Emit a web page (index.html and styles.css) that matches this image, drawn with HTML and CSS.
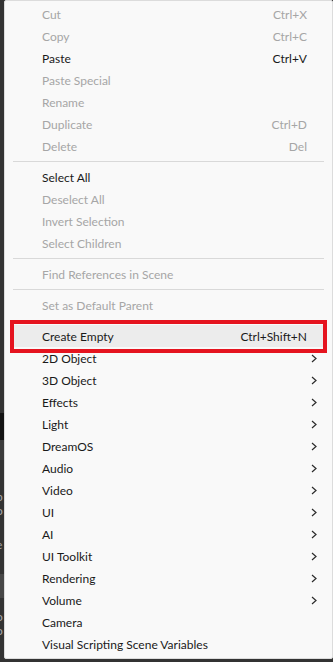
FILE: index.html
```html
<!DOCTYPE html>
<html lang="en">
<head>
    <meta charset="UTF-8">
    <meta name="viewport" content="width=device-width, initial-scale=1.0">
    <title>Hierarchy Context Menu</title>
    <link rel="stylesheet" href="styles.css">
</head>
<body>
<div class="editor">
    <div class="backdrop">
        <div class="band dark"></div>
        <div class="band mid"></div>
        <div class="band glyph">p</div>
        <div class="band glyph">o</div>
        <div class="band glyph">e</div>
        <div class="band light"></div>
        <div class="band glyph">o</div>
        <div class="band glyph">o</div>
    </div>

    <div class="menu">
        <div class="group">
            <div class="item disabled"><span class="label">Cut</span><span class="key">Ctrl+X</span></div>
            <div class="item disabled"><span class="label">Copy</span><span class="key">Ctrl+C</span></div>
            <div class="item"><span class="label">Paste</span><span class="key">Ctrl+V</span></div>
            <div class="item disabled"><span class="label">Paste Special</span></div>
            <div class="item disabled"><span class="label">Rename</span></div>
            <div class="item disabled"><span class="label">Duplicate</span><span class="key">Ctrl+D</span></div>
            <div class="item disabled"><span class="label">Delete</span><span class="key">Del</span></div>
        </div>
        <div class="separator"></div>
        <div class="group">
            <div class="item"><span class="label">Select All</span></div>
            <div class="item disabled"><span class="label">Deselect All</span></div>
            <div class="item disabled"><span class="label">Invert Selection</span></div>
            <div class="item disabled"><span class="label">Select Children</span></div>
        </div>
        <div class="separator"></div>
        <div class="item disabled"><span class="label">Find References in Scene</span></div>
        <div class="separator"></div>
        <div class="item disabled"><span class="label">Set as Default Parent</span></div>
        <div class="separator"></div>
        <div class="group">
            <div class="item active"><span class="label">Create Empty</span><span class="key">Ctrl+Shift+N</span></div>
            <div class="item sub"><span class="label">2D Object</span><svg class="chevron" viewBox="0 0 6 9"><polyline points="1,1 5,4.5 1,8"/></svg></div>
            <div class="item sub"><span class="label">3D Object</span><svg class="chevron" viewBox="0 0 6 9"><polyline points="1,1 5,4.5 1,8"/></svg></div>
            <div class="item sub"><span class="label">Effects</span><svg class="chevron" viewBox="0 0 6 9"><polyline points="1,1 5,4.5 1,8"/></svg></div>
            <div class="item sub"><span class="label">Light</span><svg class="chevron" viewBox="0 0 6 9"><polyline points="1,1 5,4.5 1,8"/></svg></div>
            <div class="item sub"><span class="label">DreamOS</span><svg class="chevron" viewBox="0 0 6 9"><polyline points="1,1 5,4.5 1,8"/></svg></div>
            <div class="item sub"><span class="label">Audio</span><svg class="chevron" viewBox="0 0 6 9"><polyline points="1,1 5,4.5 1,8"/></svg></div>
            <div class="item sub"><span class="label">Video</span><svg class="chevron" viewBox="0 0 6 9"><polyline points="1,1 5,4.5 1,8"/></svg></div>
            <div class="item sub"><span class="label">UI</span><svg class="chevron" viewBox="0 0 6 9"><polyline points="1,1 5,4.5 1,8"/></svg></div>
            <div class="item sub"><span class="label">AI</span><svg class="chevron" viewBox="0 0 6 9"><polyline points="1,1 5,4.5 1,8"/></svg></div>
            <div class="item sub"><span class="label">UI Toolkit</span><svg class="chevron" viewBox="0 0 6 9"><polyline points="1,1 5,4.5 1,8"/></svg></div>
            <div class="item sub"><span class="label">Rendering</span><svg class="chevron" viewBox="0 0 6 9"><polyline points="1,1 5,4.5 1,8"/></svg></div>
            <div class="item sub"><span class="label">Volume</span><svg class="chevron" viewBox="0 0 6 9"><polyline points="1,1 5,4.5 1,8"/></svg></div>
            <div class="item"><span class="label">Camera</span></div>
            <div class="item"><span class="label">Visual Scripting Scene Variables</span></div>
        </div>
    </div>
</div>
</body>
</html>
```

FILE: styles.css
```css
* {
    margin: 0;
    padding: 0;
    box-sizing: border-box;
}

body {
    width: 333px;
    height: 662px;
    overflow: hidden;
    background: #333333;
    font-family: "Segoe UI", Lato, "Noto Sans", sans-serif;
    font-size: 12px;
    color: #1a1a1a;
}

.editor {
    display: flex;
    height: 662px;
}

/* bits of the hierarchy window behind the menu */
.backdrop {
    width: 4px;
    flex-shrink: 0;
    display: flex;
    flex-direction: column;
    padding-top: 413px;
    overflow: hidden;
}

.band {
    width: 4px;
}

.band.dark {
    height: 27px;
    background: #141414;
}

.band.mid {
    height: 20px;
    background: #3c3c3c;
    margin-bottom: 30px;
}

.band.glyph {
    height: 14px;
    color: #a8a8a8;
    font-size: 12px;
    line-height: 14px;
    text-indent: -4px;
    overflow: hidden;
}

.band.glyph:nth-child(5) {
    margin: 20px 0 22px;
}

.band.light {
    height: 24px;
    background: #474747;
    margin-bottom: 12px;
}

.menu {
    width: 329px;
    height: 659px;
    flex-shrink: 0;
    background: #f9f9f9;
    border: 1px solid #dcdcdc;
    border-radius: 2px;
    padding: 2px 0;
}

.item {
    position: relative;
    display: flex;
    align-items: center;
    height: 22px;
    padding: 0 25px 0 37px;
    white-space: nowrap;
}

.item .label {
    flex: 1;
}

.item .key {
    text-align: right;
}

.item.disabled {
    color: #a6a6a6;
}

.separator {
    height: 1px;
    margin: 4px 8px;
    background: #d9d9d9;
}

.item.active {
    background: #ececec;
    margin: 0 9px;
    padding-left: 28px;
    padding-right: 16px;
}

/* red annotation frame drawn over the row */
.item.active::after {
    content: "";
    position: absolute;
    top: -5px;
    bottom: -6px;
    left: -4px;
    right: -4px;
    border: 4px solid #e5141f;
}

.chevron {
    position: absolute;
    right: 15px;
    top: 7px;
    width: 6px;
    height: 9px;
    fill: none;
    stroke: #2b2b2b;
    stroke-width: 1.2;
}
```
